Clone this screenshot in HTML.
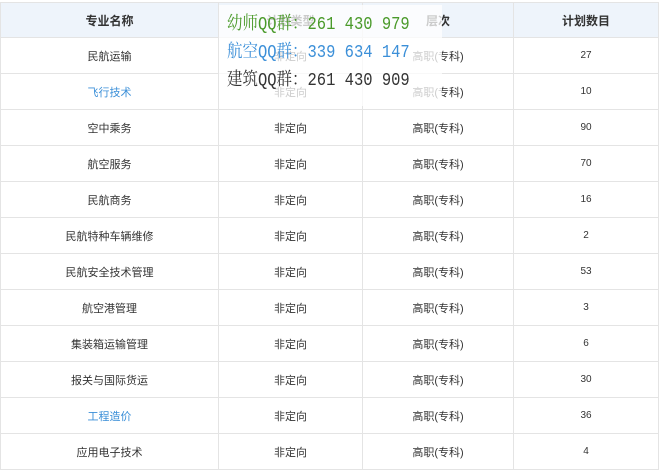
<!DOCTYPE html>
<html><head><meta charset="utf-8"><style>
body{margin:0;width:660px;height:469px;overflow:hidden;background:#fff;font-family:"Liberation Sans","Noto Sans CJK SC",sans-serif;}
table{position:absolute;left:0;top:2px;border-collapse:collapse;width:658px;table-layout:fixed}
td,th{border:1px solid #e4e4e4;text-align:center;height:35px;padding:0;font-size:11px;color:#333}
th{background:#eef4fb;font-size:12px;font-weight:bold;height:34px}
td.b{color:#3b8fd8}
td.n{font-size:10px}
.ov{position:absolute;left:219px;top:5px;width:223px;height:101px;background:rgba(255,255,255,0.75)}
.q{position:absolute;left:227px;font-family:"Liberation Mono","Noto Serif CJK SC",monospace;font-size:18px;white-space:pre;transform:scaleX(0.86);transform-origin:0 0}
</style></head><body>
<table>
<colgroup><col style="width:218px"><col style="width:144px"><col style="width:151px"><col style="width:145px"></colgroup>
<tr><th>专业名称</th><th>计划类型</th><th>层次</th><th>计划数目</th></tr>
<tr><td>民航运输</td><td>非定向</td><td>高职(专科)</td><td class="n">27</td></tr>
<tr><td class="b">飞行技术</td><td>非定向</td><td>高职(专科)</td><td class="n">10</td></tr>
<tr><td>空中乘务</td><td>非定向</td><td>高职(专科)</td><td class="n">90</td></tr>
<tr><td>航空服务</td><td>非定向</td><td>高职(专科)</td><td class="n">70</td></tr>
<tr><td>民航商务</td><td>非定向</td><td>高职(专科)</td><td class="n">16</td></tr>
<tr><td>民航特种车辆维修</td><td>非定向</td><td>高职(专科)</td><td class="n">2</td></tr>
<tr><td>民航安全技术管理</td><td>非定向</td><td>高职(专科)</td><td class="n">53</td></tr>
<tr><td>航空港管理</td><td>非定向</td><td>高职(专科)</td><td class="n">3</td></tr>
<tr><td>集装箱运输管理</td><td>非定向</td><td>高职(专科)</td><td class="n">6</td></tr>
<tr><td>报关与国际货运</td><td>非定向</td><td>高职(专科)</td><td class="n">30</td></tr>
<tr><td class="b">工程造价</td><td>非定向</td><td>高职(专科)</td><td class="n">36</td></tr>
<tr><td>应用电子技术</td><td>非定向</td><td>高职(专科)</td><td class="n">4</td></tr>
</table>
<div class="ov"></div>
<div class="q" style="top:9px;color:#4a9a2a">幼师QQ群：261 430 979</div>
<div class="q" style="top:37px;color:#3b8fd8">航空QQ群：339 634 147</div>
<div class="q" style="top:65px;color:#333">建筑QQ群：261 430 909</div>
</body></html>
